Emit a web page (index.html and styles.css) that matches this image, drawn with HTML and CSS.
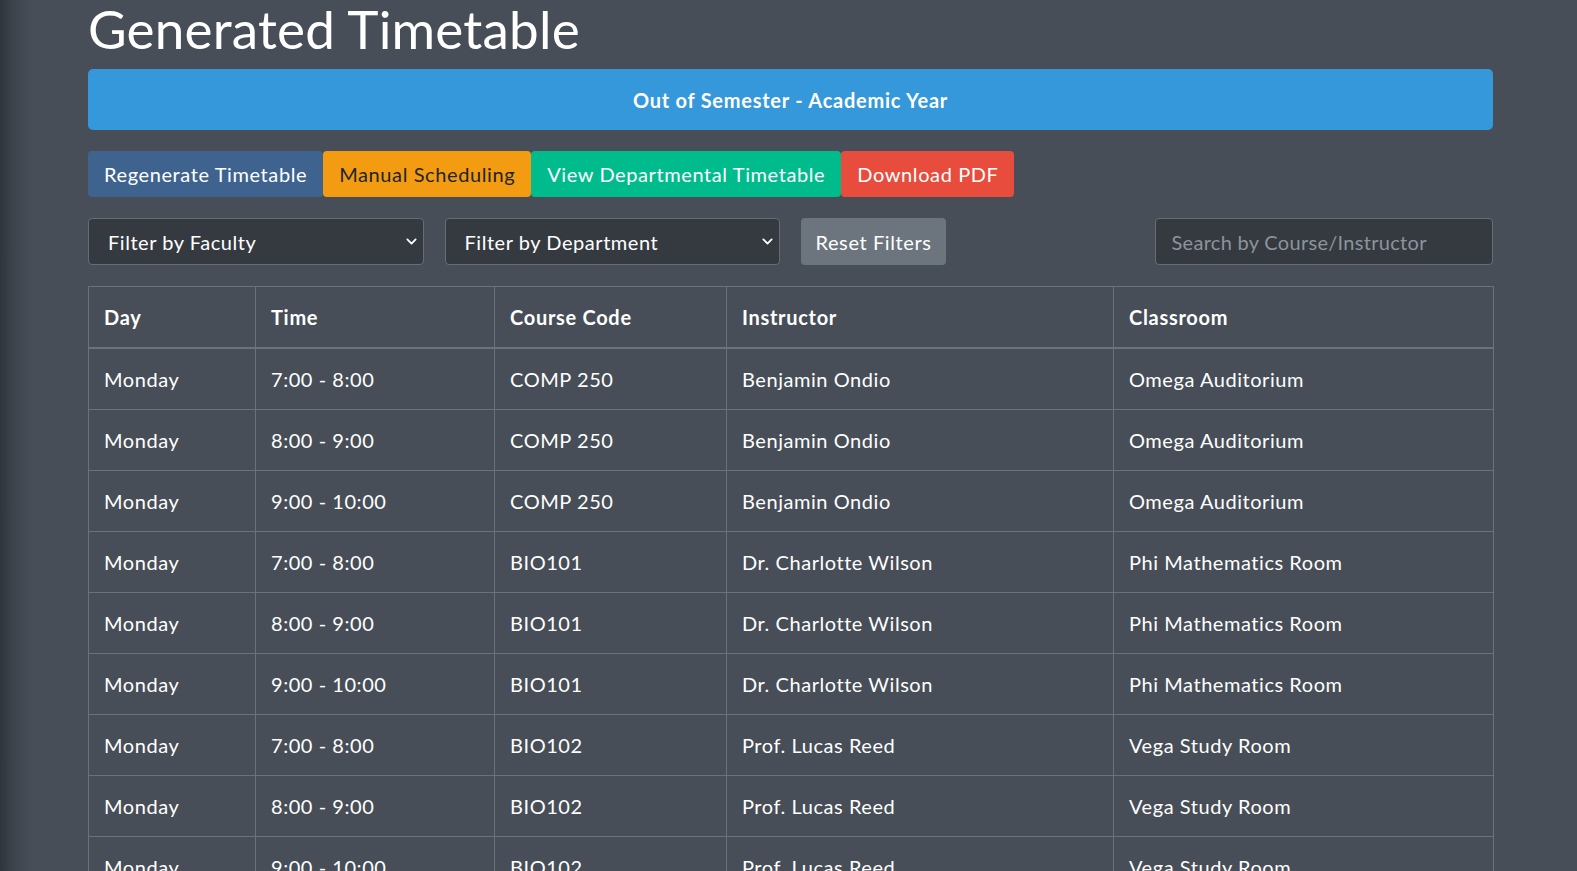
FILE: index.html
```html
<!DOCTYPE html>
<html lang="en">
<head>
<meta charset="utf-8">
<title>Generated Timetable</title>
<link rel="stylesheet" href="styles.css">
</head>
<body>
<main class="page">
  <h1 class="title">Generated Timetable</h1>
  <div class="alert">Out of Semester - Academic Year</div>
  <div class="actions">
    <button class="btn btn-primary">Regenerate Timetable</button>
    <button class="btn btn-warning">Manual Scheduling</button>
    <button class="btn btn-success">View Departmental Timetable</button>
    <button class="btn btn-danger">Download PDF</button>
  </div>
  <div class="filters">
    <div class="select">
      <span>Filter by Faculty</span>
      <svg class="chev" viewBox="0 0 16 16" width="11" height="11"><path d="M2 5l6 6 6-6" fill="none" stroke="#fff" stroke-width="2.6" stroke-linecap="round" stroke-linejoin="round"/></svg>
    </div>
    <div class="select">
      <span>Filter by Department</span>
      <svg class="chev" viewBox="0 0 16 16" width="11" height="11"><path d="M2 5l6 6 6-6" fill="none" stroke="#fff" stroke-width="2.6" stroke-linecap="round" stroke-linejoin="round"/></svg>
    </div>
    <div class="reset-cell"><button class="btn btn-secondary">Reset Filters</button></div>
    <input class="search" type="text" placeholder="Search by Course/Instructor">
  </div>
  <table class="table">
    <colgroup>
      <col class="c-day"><col class="c-time"><col class="c-code"><col class="c-inst"><col class="c-room">
    </colgroup>
    <thead>
      <tr><th>Day</th><th>Time</th><th>Course Code</th><th>Instructor</th><th>Classroom</th></tr>
    </thead>
    <tbody>
      <tr><td>Monday</td><td>7:00 - 8:00</td><td>COMP 250</td><td>Benjamin Ondio</td><td>Omega Auditorium</td></tr>
      <tr><td>Monday</td><td>8:00 - 9:00</td><td>COMP 250</td><td>Benjamin Ondio</td><td>Omega Auditorium</td></tr>
      <tr><td>Monday</td><td>9:00 - 10:00</td><td>COMP 250</td><td>Benjamin Ondio</td><td>Omega Auditorium</td></tr>
      <tr><td>Monday</td><td>7:00 - 8:00</td><td>BIO101</td><td>Dr. Charlotte Wilson</td><td>Phi Mathematics Room</td></tr>
      <tr><td>Monday</td><td>8:00 - 9:00</td><td>BIO101</td><td>Dr. Charlotte Wilson</td><td>Phi Mathematics Room</td></tr>
      <tr><td>Monday</td><td>9:00 - 10:00</td><td>BIO101</td><td>Dr. Charlotte Wilson</td><td>Phi Mathematics Room</td></tr>
      <tr><td>Monday</td><td>7:00 - 8:00</td><td>BIO102</td><td>Prof. Lucas Reed</td><td>Vega Study Room</td></tr>
      <tr><td>Monday</td><td>8:00 - 9:00</td><td>BIO102</td><td>Prof. Lucas Reed</td><td>Vega Study Room</td></tr>
      <tr><td>Monday</td><td>9:00 - 10:00</td><td>BIO102</td><td>Prof. Lucas Reed</td><td>Vega Study Room</td></tr>
    </tbody>
  </table>
</main>
</body>
</html>
```

FILE: styles.css
```css
html, body {
  margin: 0;
  padding: 0;
}
body {
  background: linear-gradient(to right, #30353c 0px, #3d434b 12px, #474e57 32px, #474e57 100%);
  color: #fff;
  font-family: "Lato", "Noto Sans", sans-serif;
  font-size: 20px;
  letter-spacing: 0.55px;
  height: 871px;
  overflow: hidden;
}
.page {
  width: 1405px;
  margin-left: 88px;
}
.title {
  margin: 0;
  font-size: 53px;
  font-weight: 400;
  letter-spacing: 0.2px;
  line-height: 58px;
  height: 69px;
}
.alert {
  background: #3498db;
  border-radius: 5px;
  height: 61px;
  display: flex;
  align-items: center;
  justify-content: center;
  font-weight: 700;
  font-size: 20px;
  letter-spacing: 0.75px;
}
.actions {
  display: flex;
  margin-top: 21px;
}
.btn {
  font-family: inherit;
  font-size: 20px;
  letter-spacing: 0.6px;
  line-height: 28px;
  padding: 9px 16px;
  border: 0;
  border-radius: 4px;
  color: #fff;
  cursor: pointer;
}
.btn-primary { background: #3f638f; }
.btn-warning { background: #f39c12; color: #212529; }
.btn-success { background: #00bc8c; }
.btn-danger { background: #e74c3c; }
.btn-secondary { background: #6c757d; }
.filters {
  display: grid;
  grid-template-columns: repeat(4, 1fr);
  column-gap: 21px;
  margin-top: 21px;
  height: 47px;
}
.select {
  background: #343a40;
  border: 1px solid #666d75;
  border-radius: 4px;
  display: flex;
  align-items: center;
  justify-content: space-between;
  padding: 0 6px 0 19px;
}
.reset-cell .btn {
  height: 47px;
  width: 145px;
  padding: 0;
}
.search {
  background: #343a40;
  border: 1px solid #666d75;
  border-radius: 4px;
  color: #fff;
  font-family: inherit;
  font-size: 20px;
  letter-spacing: 0.3px;
  padding: 0 16px;
  height: 47px;
  box-sizing: border-box;
  outline: none;
  margin-left: -3px;
  width: calc(100% + 3px);
}
.search::placeholder {
  color: #8c949c;
}
.table {
  margin-top: 21px;
  width: 1405px;
  border-collapse: collapse;
  table-layout: fixed;
}
.c-day { width: 167px; }
.c-time { width: 239px; }
.c-code { width: 232px; }
.c-inst { width: 387px; }
.c-room { width: 380px; }
.table th, .table td {
  border: 1px solid #6b727c;
  padding: 15px 15px;
  line-height: 30px;
  text-align: left;
}
.table th {
  font-weight: 700;
  letter-spacing: 0.7px;
  border-bottom: 2px solid #6b727c;
}
.table td {
  font-weight: 400;
}
```
